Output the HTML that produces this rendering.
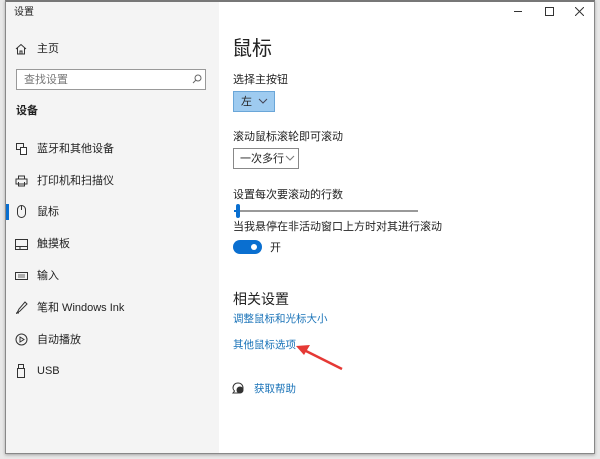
<!DOCTYPE html>
<html><head><meta charset="utf-8"><style>
*{margin:0;padding:0;box-sizing:border-box}
body{width:600px;height:459px;background:#e8e8e8;position:relative;overflow:hidden;font-family:"Liberation Sans","Noto Sans CJK SC",sans-serif;color:#222}
.win{position:absolute;left:5px;top:0;width:590px;height:454px;background:#fff;border:1px solid #888;border-top:2px solid #777;box-shadow:0 1px 3px rgba(0,0,0,.3)}
.side{position:absolute;left:0;top:0;width:213px;height:100%;background:#f4f4f4}
.t{position:absolute;font-size:11px;white-space:nowrap;line-height:14px}
.ic{position:absolute}
.link{color:#1a73b8}
</style></head><body>
<div class="win">
<div class="side"></div>
</div>
<div class="t" style="left:14px;top:6px;font-size:10px">设置</div>
<div style="position:absolute;left:514px;top:11px;width:8px;height:1px;background:#333"></div>
<div style="position:absolute;left:545px;top:7px;width:9px;height:9px;border:1px solid #333"></div>
<svg class="ic" style="left:575px;top:7px" width="9" height="9" viewBox="0 0 9 9"><path d="M0 0L9 9M9 0L0 9" stroke="#333"/></svg>

<svg class="ic" style="left:15px;top:43px" width="12" height="12" viewBox="0 0 12 12"><path d="M1 6L6 1.5L11 6M2.5 5V11H9.5V5M5 11V8H7V11" fill="none" stroke="#333" stroke-width="1"/></svg>
<div class="t" style="left:37px;top:42px">主页</div>
<div style="position:absolute;left:16px;top:69px;width:190px;height:21px;border:1px solid #999;background:#fff"></div>
<div class="t" style="left:24px;top:73px;color:#777">查找设置</div>
<svg class="ic" style="left:192px;top:74px" width="10" height="10" viewBox="0 0 10 10"><circle cx="6" cy="4" r="3" fill="none" stroke="#666"/><path d="M4 6L1 9" stroke="#666"/></svg>
<div class="t" style="left:16px;top:104px;font-weight:bold">设备</div>

<svg class="ic" style="left:16px;top:143px" width="12" height="12" viewBox="0 0 12 12"><rect x="0.5" y="0.5" width="7" height="6" fill="none" stroke="#333"/><rect x="4.5" y="4.5" width="6" height="7" fill="#fff" stroke="#333"/></svg>
<div class="t" style="left:37px;top:142px">蓝牙和其他设备</div>
<svg class="ic" style="left:15px;top:175px" width="13" height="12" viewBox="0 0 13 12"><path d="M3.5 4V1H9.5V4M1 4H12V9H1ZM3.5 7V11H9.5V7" fill="none" stroke="#333"/></svg>
<div class="t" style="left:37px;top:174px">打印机和扫描仪</div>
<div style="position:absolute;left:6px;top:204px;width:3px;height:16px;background:#0a6fd0"></div>
<svg class="ic" style="left:17px;top:205px" width="9" height="13" viewBox="0 0 9 13"><rect x="0.5" y="0.5" width="8" height="12" rx="4" fill="none" stroke="#333"/><path d="M4.5 1V5" stroke="#333"/></svg>
<div class="t" style="left:37px;top:205px">鼠标</div>
<svg class="ic" style="left:15px;top:239px" width="13" height="11" viewBox="0 0 13 11"><rect x="0.5" y="0.5" width="12" height="10" fill="none" stroke="#333"/><path d="M0.5 7.5H12.5M5 7.5V10.5" stroke="#333"/></svg>
<div class="t" style="left:37px;top:237px">触摸板</div>
<svg class="ic" style="left:15px;top:272px" width="13" height="8" viewBox="0 0 13 8"><rect x="0.5" y="0.5" width="12" height="7" fill="none" stroke="#333"/><path d="M3 3H10M3 5H10" stroke="#333" stroke-width=".8"/></svg>
<div class="t" style="left:37px;top:269px">输入</div>
<svg class="ic" style="left:15px;top:301px" width="13" height="13" viewBox="0 0 13 13"><path d="M2 12L4 8L10 1L12 3L5 10Z M1 12H4" fill="none" stroke="#333"/></svg>
<div class="t" style="left:37px;top:301px">笔和 Windows Ink</div>
<svg class="ic" style="left:15px;top:333px" width="13" height="13" viewBox="0 0 13 13"><circle cx="6.5" cy="6.5" r="5.5" fill="none" stroke="#333"/><path d="M5 4V9L9 6.5Z" fill="none" stroke="#333"/></svg>
<div class="t" style="left:37px;top:333px">自动播放</div>
<svg class="ic" style="left:17px;top:364px" width="8" height="14" viewBox="0 0 8 14"><rect x="0.5" y="4.5" width="7" height="9" fill="none" stroke="#333"/><rect x="1.5" y="0.5" width="5" height="4" fill="none" stroke="#333"/></svg>
<div class="t" style="left:37px;top:364px">USB</div>

<div class="t" style="left:232px;top:37px;font-size:20px;line-height:24px">鼠标</div>
<div class="t" style="left:233px;top:73px">选择主按钮</div>
<div style="position:absolute;left:233px;top:91px;width:42px;height:21px;background:#9ecbf0;border:1px solid #6aa6d8"></div>
<div class="t" style="left:241px;top:95px">左</div>
<svg class="ic" style="left:258px;top:98px" width="10" height="6" viewBox="0 0 10 6"><path d="M1 1L5 5L9 1" fill="none" stroke="#445"/></svg>
<div class="t" style="left:233px;top:130px">滚动鼠标滚轮即可滚动</div>
<div style="position:absolute;left:233px;top:148px;width:66px;height:21px;border:1px solid #888;background:#fff"></div>
<div class="t" style="left:240px;top:152px">一次多行</div>
<svg class="ic" style="left:285px;top:155px" width="10" height="6" viewBox="0 0 10 6"><path d="M1 1L5 5L9 1" fill="none" stroke="#777"/></svg>
<div class="t" style="left:233px;top:188px">设置每次要滚动的行数</div>
<div style="position:absolute;left:234px;top:210px;width:184px;height:2px;background:#999"></div>
<div style="position:absolute;left:234px;top:210px;width:4px;height:2px;background:#0a6fd0"></div>
<div style="position:absolute;left:236px;top:204px;width:4px;height:14px;border-radius:2px;background:#0a6fd0"></div>
<div class="t" style="left:233px;top:220px">当我悬停在非活动窗口上方时对其进行滚动</div>
<div style="position:absolute;left:233px;top:240px;width:29px;height:14px;border-radius:7px;background:#0a6fd0"></div>
<div style="position:absolute;left:251px;top:244px;width:6px;height:6px;border-radius:3px;background:#fff"></div>
<div class="t" style="left:270px;top:241px">开</div>

<div class="t" style="left:233px;top:290px;font-size:14px;line-height:18px">相关设置</div>
<div class="t link" style="left:233px;top:312px;font-size:10.5px">调整鼠标和光标大小</div>
<div class="t link" style="left:233px;top:338px;font-size:10.5px">其他鼠标选项</div>
<svg class="ic" style="left:232px;top:382px" width="13" height="13" viewBox="0 0 13 13"><path d="M1 6C1 3 3 1 6 1S11 3 11 6 9 11 6 11H1L2.5 9C1.5 8 1 7 1 6Z" fill="#fff" stroke="#333"/><circle cx="8" cy="8" r="3.5" fill="#333"/></svg>
<div class="t link" style="left:254px;top:382px;font-size:10.5px">获取帮助</div>
<svg class="ic" style="left:290px;top:340px" width="60" height="35" viewBox="0 0 60 35"><path d="M52 29L14 10" stroke="#e53935" stroke-width="2.5"/><path d="M6 6L20 5L14 15Z" fill="#e53935"/></svg>
</body></html>
